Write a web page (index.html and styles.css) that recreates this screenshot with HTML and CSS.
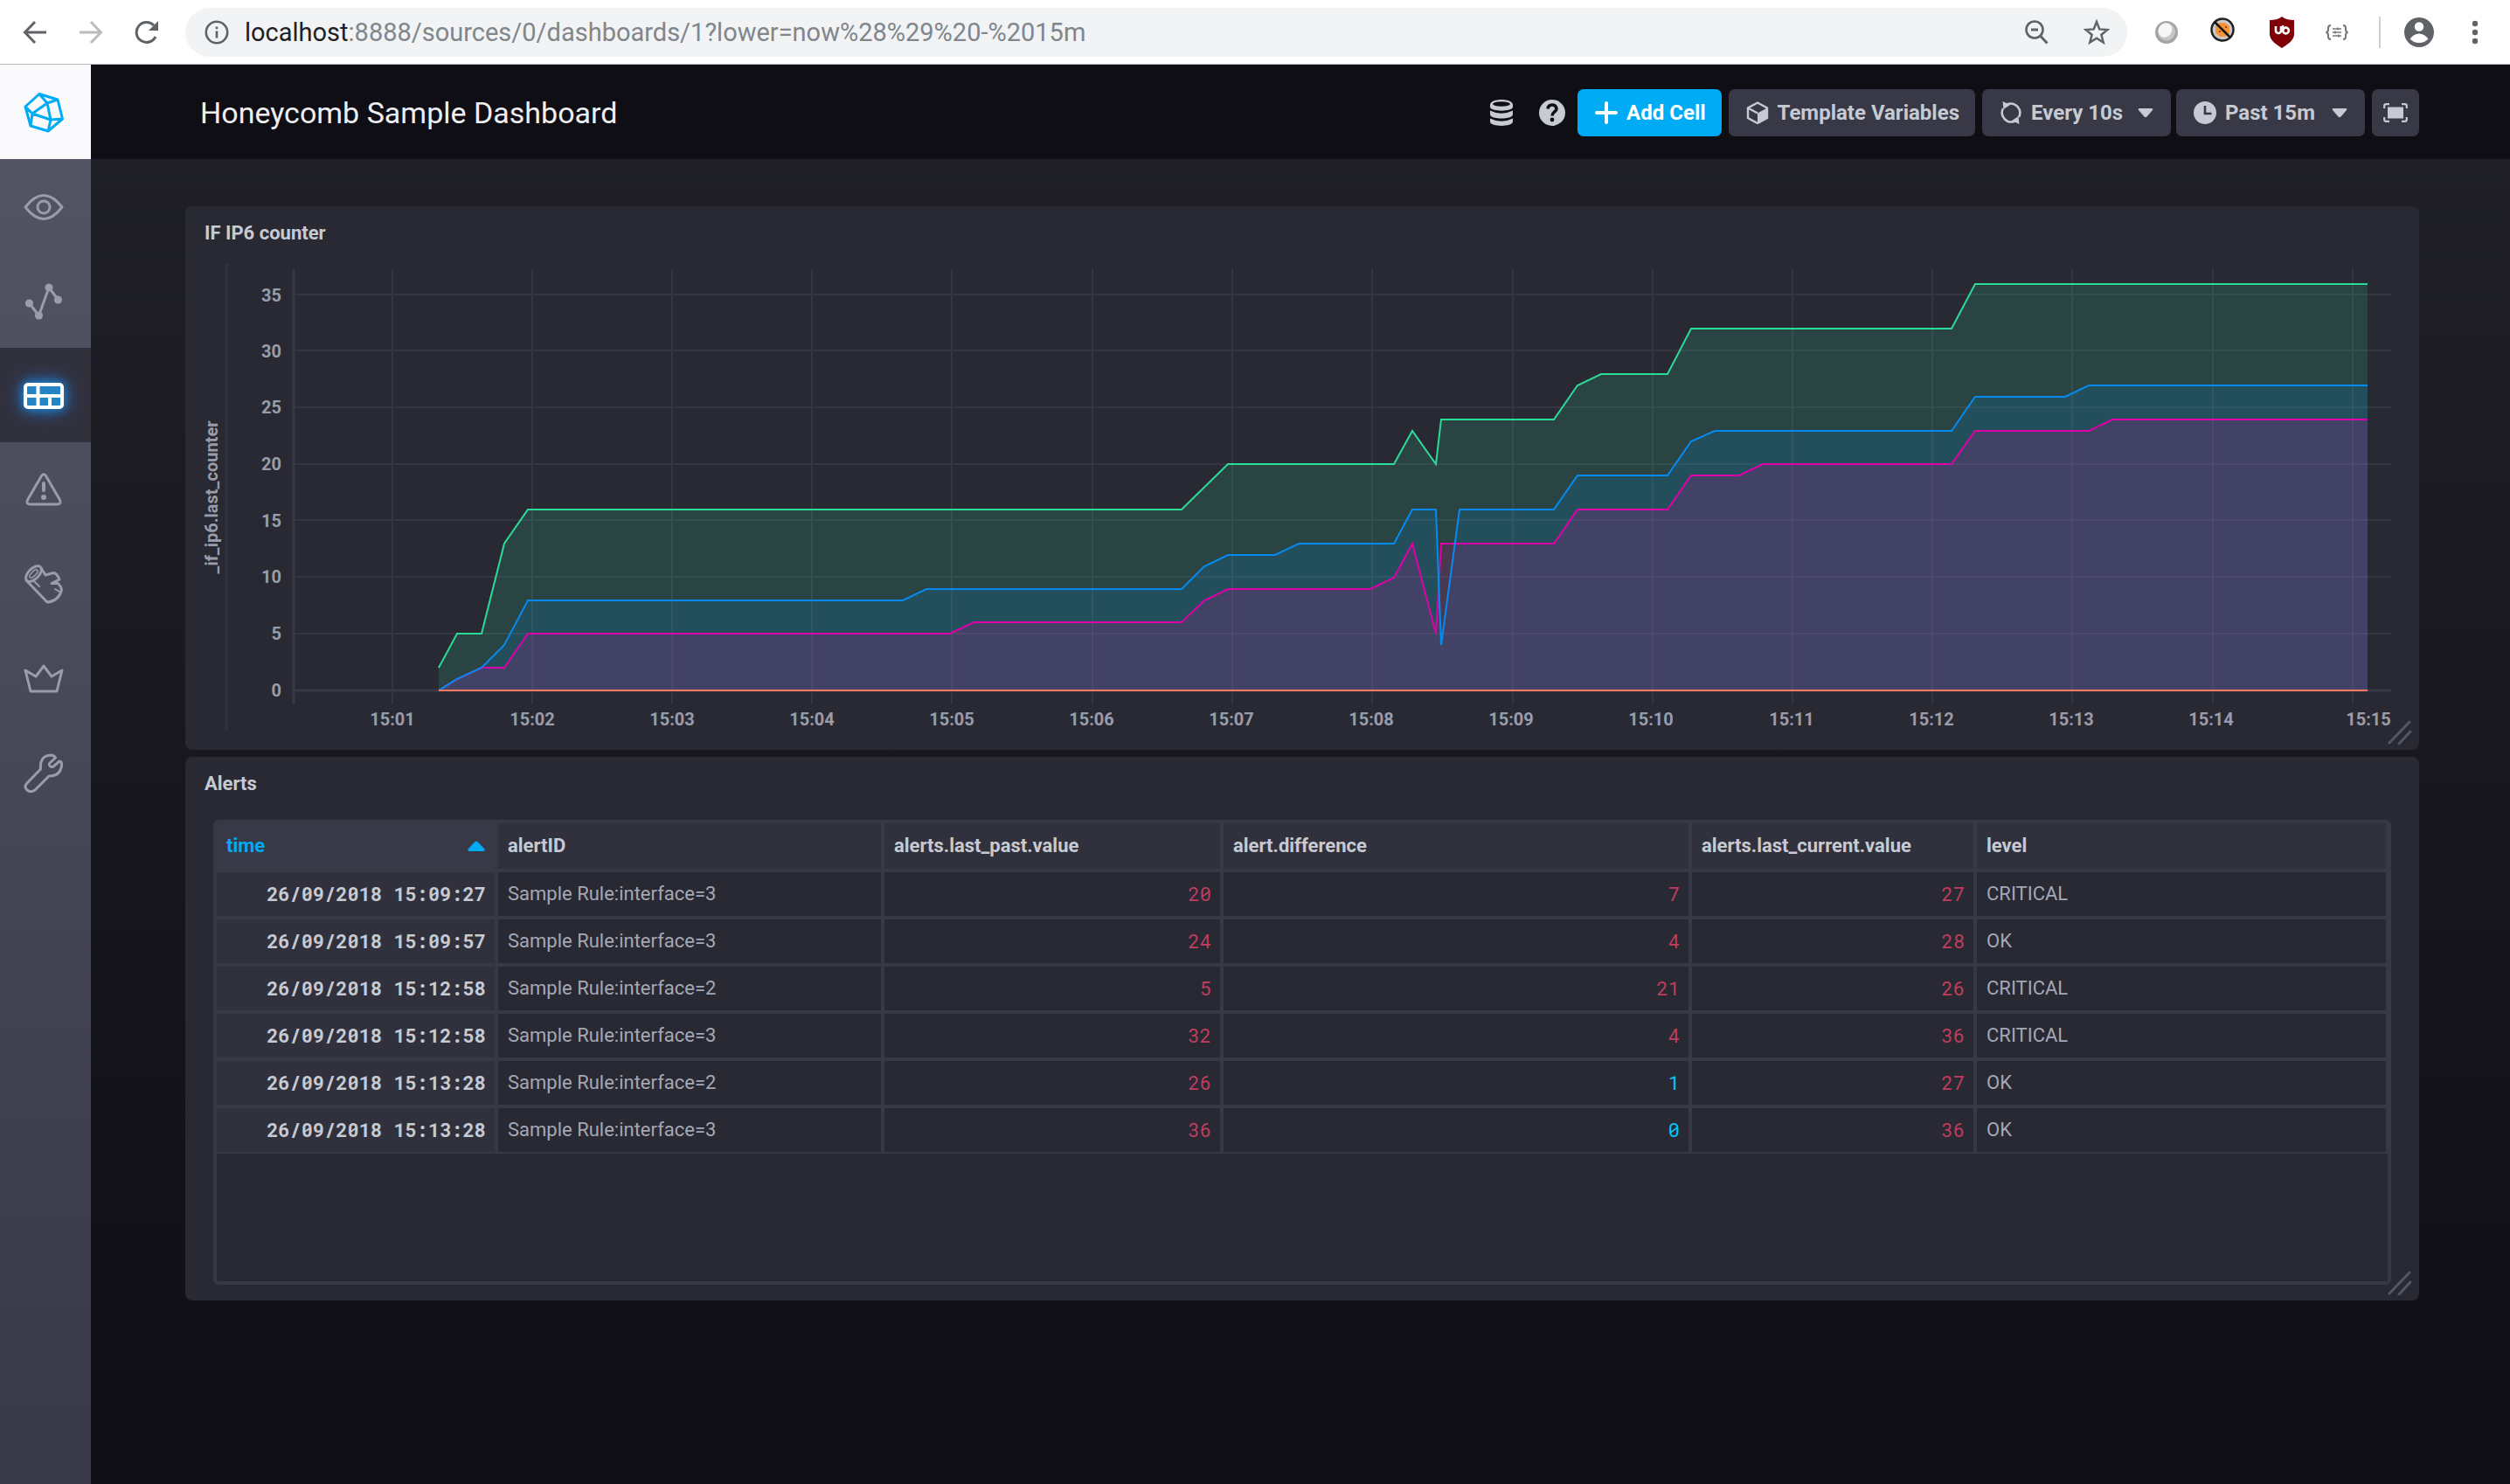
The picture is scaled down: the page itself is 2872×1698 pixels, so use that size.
FILE: index.html
```html
<!DOCTYPE html>
<html lang="en">
<head>
<meta charset="utf-8">
<title>Honeycomb Sample Dashboard</title>
<link rel="stylesheet" href="styles.css">
</head>
<body>
<div class="window">
  <header class="browser">
    <button class="nav-button" aria-label="Back"><svg width="28" height="28" viewBox="0 0 28 28"><path d="M27 14H3M14 2L2.500 14L14 26" fill="none" stroke="#5f6368" stroke-width="3"/></svg></button>
    <button class="nav-button" aria-label="Forward"><svg width="28" height="28" viewBox="0 0 28 28"><path d="M1 14H25M14 2L25.500 14L14 26" fill="none" stroke="#babcbe" stroke-width="3"/></svg></button>
    <button class="nav-button" aria-label="Reload"><svg width="28" height="28" viewBox="0 0 28 28"><path d="M24 19A11.500 11.500 0 1 1 22 6" fill="none" stroke="#5f6368" stroke-width="3"/><path d="M27 1V12H16z" fill="#5f6368"/></svg></button>
    <div class="address">
      <svg width="28" height="28" viewBox="0 0 28 28"><circle cx="14" cy="14" r="12.200" fill="none" stroke="#5f6368" stroke-width="2.600"/><path d="M14 12.500V20.500M14 7.500V10.200" stroke="#5f6368" stroke-width="2.600"/></svg>
      <a class="url" href="#"><span class="host">localhost</span>:8888/sources/0/dashboards/1?lower=now%28%29%20-%2015m</a>
      <svg width="28" height="32" viewBox="0 0 28 32"><circle cx="12" cy="13" r="9.500" fill="none" stroke="#5f6368" stroke-width="2.600"/><path d="M8 13h8M18.500 20L26.500 28.500" stroke="#5f6368" stroke-width="3"/></svg>
      <svg class="star" width="30" height="32" viewBox="0 0 30 32"><path d="M15 4L18.300 12.400L27.500 13L20.400 18.700L22.700 27.500L15 22.700L7.300 27.500L9.600 18.700L2.500 13L11.700 12.400z" fill="none" stroke="#5f6368" stroke-width="2.500"/></svg>
    </div>
    <div class="extensions">
      <svg width="30" height="30" viewBox="0 0 30 30"><circle cx="15" cy="15" r="13" fill="#a5a5a5"/><circle cx="15" cy="14.500" r="10" fill="#c6c6c6"/><ellipse cx="13.500" cy="12.500" rx="7.500" ry="8.500" transform="rotate(35 13.500 12.500)" fill="#f7f7f7"/></svg>
      <svg width="34" height="34" viewBox="0 0 34 34"><circle cx="15" cy="14" r="12.500" fill="#c9c9c9" stroke="#222" stroke-width="2.500"/><path d="M7 9L12 6H18L23 10V18L18 22H12L7 18z" fill="#f79338"/><path d="M11 16h2M17 17h3M18 11h2" stroke="#8a4a10" stroke-width="2"/><path d="M6 5L24 23" stroke="#111" stroke-width="2.500"/></svg>
      <svg width="30" height="38" viewBox="0 0 30 38"><path d="M15 1C19 4 24 5 29 5V22C28 29 21 33 15 37C9 33 2 29 1 22V5C6 5 11 4 15 1z" fill="#800007"/><path d="M8 12V17A3 3 0 0 0 14 17V12" fill="none" stroke="#fff" stroke-width="2.600"/><circle cx="19.500" cy="17" r="3.400" fill="none" stroke="#fff" stroke-width="2.600"/><path d="M16.100 11V17" stroke="#fff" stroke-width="2.400"/></svg>
      <svg width="28" height="20" viewBox="0 0 28 20"><path d="M7 2Q4 2 4 5V7Q4 9.500 1.500 10Q4 10.500 4 13V15Q4 18 7 18M21 2Q24 2 24 5V7Q24 9.500 26.500 10Q24 10.500 24 13V15Q24 18 21 18" fill="none" stroke="#777" stroke-width="2"/><path d="M9 6h10M9 10h10M9 14h10M15 4.500v3M12 8.500v3M16 12.500v3" stroke="#777" stroke-width="1.600"/></svg>
      <span class="divider"></span>
      <svg width="34" height="34" viewBox="0 0 34 34"><circle cx="17" cy="17" r="17" fill="#5f6368"/><circle cx="17" cy="10.500" r="5.200" fill="#fff"/><path d="M6.500 24.500Q11 18.500 17 18.500T27.500 24.500Q23 29 17 29T6.500 24.500z" fill="#fff"/></svg>
      <button class="menu-button" aria-label="Browser menu"><svg width="8" height="28" viewBox="0 0 8 28"><g fill="#5f6368"><circle cx="4" cy="4" r="3.200"/><circle cx="4" cy="14" r="3.200"/><circle cx="4" cy="24" r="3.200"/></g></svg></button>
    </div>
  </header>

  <div class="app">
    <nav class="sidebar">
      <a class="side-item logo" href="#" aria-label="Home"><svg width="46" height="46" viewBox="0 0 46 46"><path d="M18 1.500L39 8L44.500 30L28 44L8 38L2 16zM18 1.500L27 12L39 8M27 12L31 31L28 44M31 31L44.500 30M27 12L10 24L31 31M10 24L2 16M10 24L8 38"/></svg></a>
      <a class="side-item" href="#" aria-label="Host list"><svg width="46" height="46" viewBox="0 0 46 46"><path d="M2 23Q23-4 44 23Q23 50 2 23z"/><circle cx="23" cy="23" r="7"/></svg></a>
      <a class="side-item" href="#" aria-label="Explore"><svg width="46" height="46" viewBox="0 0 46 46"><path d="M6.500 25L17.500 39L29 7L39.500 21"/><g class="solid"><circle cx="6.500" cy="25" r="4.600"/><circle cx="17.500" cy="39" r="4.600"/><circle cx="29" cy="7" r="4.600"/><circle cx="39.500" cy="21" r="4.600"/></g></svg></a>
      <a class="side-item active" href="#" aria-label="Dashboards"><svg width="46" height="46" viewBox="0 0 46 46"><rect x="2" y="10" width="42" height="26" rx="3" fill="#2384c6"/><path d="M2 23H44M16.500 10V36M30 23V36"/></svg></a>
      <a class="side-item" href="#" aria-label="Alerting"><svg width="46" height="46" viewBox="0 0 46 46"><path d="M20.500 6.500Q23 3 25.500 6.500L41.500 34Q43.500 39 38.500 39H7.500Q2.500 39 4.500 34z"/><path d="M23 15V23" stroke-width="4"/><circle class="solid" cx="23" cy="31" r="3"/></svg></a>
      <a class="side-item" href="#" aria-label="Log viewer"><svg width="46" height="46" viewBox="0 0 46 46"><ellipse cx="11.500" cy="10.500" rx="11" ry="6" transform="rotate(-45 11.500 10.500)"/><ellipse cx="11.500" cy="10.500" rx="6" ry="2.400" transform="rotate(-45 11.500 10.500)" stroke-width="1.600"/><path d="M3 18L27 43Q40 42 43.500 29Q43 25 39.500 21.500H32L41 17Q38 9.500 34 9.500L25 12L20 4"/><path d="M12 19L18 25M36 28L41 31" stroke-width="2"/></svg></a>
      <a class="side-item" href="#" aria-label="Admin"><svg width="46" height="46" viewBox="0 0 46 46"><path d="M2 13L14 20L23 8L32 20L44 13L38 37H8z"/></svg></a>
      <a class="side-item" href="#" aria-label="Configuration"><svg width="46" height="46" viewBox="0 0 46 46"><path d="M4 34L19.500 18Q18 3 31 2Q35 2 36.500 5L29.500 11.500Q29 16 33.500 15.500L41 9Q44 9 43.500 14Q42 26 29 26L13 42Q8 45.500 4 42Q0 38 4 34z"/></svg></a>
    </nav>

    <main class="main">
      <header class="page-header">
        <h1>Honeycomb Sample Dashboard</h1>
        <div class="controls">
          <button class="icon-button" aria-label="Sources"><svg width="26" height="30" viewBox="0 0 26 30"><path d="M0 6C0-2 26-2 26 6V8.500C26 14 0 14 0 8.500z"/><ellipse cx="13" cy="5" rx="10" ry="2.800" fill="#0f0e15"/><path d="M0 12.500Q13 19 26 12.500V17C26 23 0 23 0 17zM0 21.500Q13 28 26 21.500V25C26 31.500 0 31.500 0 25z"/></svg></button>
          <button class="icon-button" aria-label="Help"><svg width="30" height="30" viewBox="0 0 30 30"><circle cx="15" cy="15" r="15"/><path d="M10 10.500Q10.500 6 15 6T20 10.500C20 14 15 14 15 18.500" fill="none" stroke="#0f0e15" stroke-width="3.600"/><circle cx="15" cy="23" r="2.400" fill="#0f0e15"/></svg></button>
          <button class="button primary"><svg width="26" height="26" viewBox="0 0 26 26"><path d="M13 2V24M2 13H24" stroke="#fff" stroke-width="4" stroke-linecap="round"/></svg>Add Cell</button>
          <button class="button"><svg width="26" height="26" viewBox="0 0 26 26"><path d="M13 1.500L24 7.500V19L13 25L2 19V7.500zM2 7.500L13 13.500" fill="none" stroke="currentColor" stroke-width="2.400"/><path d="M13 13.500L24 7.500V19L13 25z"/></svg>Template Variables</button>
          <div class="button-pair">
            <button class="button wide"><svg width="26" height="26" viewBox="0 0 26 26"><path d="M8.500 3.500A10.500 10.500 0 0 1 22 18M17.500 22.500A10.500 10.500 0 0 1 4 8" fill="none" stroke="currentColor" stroke-width="2.600"/><path d="M3.500 0L4.500 9L12 4zM22.500 26L21.500 17L14 22z"/></svg><span class="label">Every 10s</span><svg width="18" height="12" viewBox="0 0 18 12"><path d="M2 1H16Q18 1 17 3L10.500 10.500Q9 12 7.500 10.500L1 3Q0 1 2 1z"/></svg></button>
            <button class="button wide"><svg width="26" height="26" viewBox="0 0 26 26"><circle cx="13" cy="13" r="13"/><path d="M13 5V14H20.500" fill="none" stroke="#383846" stroke-width="2.600"/></svg><span class="label">Past 15m</span><svg width="18" height="12" viewBox="0 0 18 12"><path d="M2 1H16Q18 1 17 3L10.500 10.500Q9 12 7.500 10.500L1 3Q0 1 2 1z"/></svg></button>
          </div>
          <button class="button square" aria-label="Presentation mode"><svg width="28" height="22" viewBox="0 0 28 22"><rect x="5" y="4.500" width="18" height="13"/><path d="M1.200 6V3.200Q1.200 1.200 3.200 1.200H7M21 1.200H24.800Q26.800 1.200 26.800 3.200V6M26.800 16V18.800Q26.800 20.800 24.800 20.800H21M7 20.800H3.200Q1.200 20.800 1.200 18.800V16" fill="none" stroke="currentColor" stroke-width="2.200"/></svg></button>
        </div>
      </header>

      <div class="cells">
        <section class="cell">
          <h2>IF IP6 counter</h2>
          <svg class="chart" viewBox="212 296 2556 562" role="img" aria-label="Counter values over time">
            <path d="M259 302V836" class="rule"/>
            <path class="grid" d="M337 337H2736M337 401H2736M337 466H2736M337 531H2736M337 595H2736M337 660H2736M337 725H2736M449 308V806M609 308V806M769 308V806M929 308V806M1089 308V806M1250 308V806M1410 308V806M1570 308V806M1731 308V806M1891 308V806M2051 308V806M2211 308V806M2371 308V806M2532 308V806M2692 308V806"/>
            <path class="axis" d="M336 308V806M336 790H2736"/>
            <g class="area">
              <path d="M502 790V764L523 725H551L577 622L604 583H1352L1405 531H1595L1616 493L1643 531L1649 480H1778L1805 441L1832 428H1908L1935 376H2233L2260 324H2709V790z"/>
              <path d="M502 790L523 777L551 764L577 738L604 687H1033L1060 674H1352L1378 648L1405 635H1459L1486 622H1595L1616 583H1643L1649 738L1670 583H1778L1805 544H1908L1935 505L1962 493H2233L2260 454H2363L2390 441H2709V790z"/>
              <path d="M502 790L523 777L551 764H577L604 725H1087L1114 712H1352L1378 687L1405 674H1568L1595 661L1616 622L1643 725L1649 622H1778L1805 583H1908L1935 544H1990L2017 531H2233L2260 493H2390L2417 480H2709V790z"/>
            </g>
            <g class="line">
              <path stroke="#2cdb97" d="M502 764L523 725H551L577 622L604 583H1352L1405 531H1595L1616 493L1643 531L1649 480H1778L1805 441L1832 428H1908L1935 376H2233L2260 325H2709"/>
              <path stroke="#de00a8" d="M502 790L523 777L551 764H577L604 725H1087L1114 712H1352L1378 687L1405 674H1568L1595 661L1616 622L1643 725L1649 622H1778L1805 583H1908L1935 544H1990L2017 531H2233L2260 493H2390L2417 480H2709"/>
              <path stroke="#058bf0" d="M502 790L523 777L551 764L577 738L604 687H1033L1060 674H1352L1378 648L1405 635H1459L1486 622H1595L1616 583H1643L1649 738L1670 583H1778L1805 544H1908L1935 505L1962 493H2233L2260 454H2363L2390 441H2709"/>
              <path stroke="#f27a62" d="M502 790H2709"/>
            </g>
            <g class="tick end">
              <text x="322" y="345">35</text><text x="322" y="409">30</text><text x="322" y="473">25</text><text x="322" y="538">20</text><text x="322" y="603">15</text><text x="322" y="667">10</text><text x="322" y="732">5</text><text x="322" y="797">0</text>
            </g>
            <g class="tick">
              <text x="449" y="830">15:01</text><text x="609" y="830">15:02</text><text x="769" y="830">15:03</text><text x="929" y="830">15:04</text><text x="1089" y="830">15:05</text><text x="1249" y="830">15:06</text><text x="1409" y="830">15:07</text><text x="1569" y="830">15:08</text><text x="1729" y="830">15:09</text><text x="1889" y="830">15:10</text><text x="2050" y="830">15:11</text><text x="2210" y="830">15:12</text><text x="2370" y="830">15:13</text><text x="2530" y="830">15:14</text><text x="2710" y="830">15:15</text>
              <text transform="translate(249 569) rotate(-90)">_if_ip6.last_counter</text>
            </g>
          </svg>
          <svg class="resize" width="28" height="28" viewBox="0 0 28 28"><path d="M2 26L25 2M13 27L26 13"/></svg>
        </section>

        <section class="cell">
          <h2>Alerts</h2>
          <div class="table-frame">
            <table>
              <colgroup><col class="c-time"><col class="c-id"><col class="c-past"><col class="c-diff"><col class="c-current"><col class="c-level"></colgroup>
              <thead>
                <tr><th class="sorted"><span class="sort">time<svg width="20" height="12" viewBox="0 0 20 12"><path d="M8.500 1Q10 0 11.500 1L19.500 9.500Q20 12 18 12H2Q0 12 .5 9.500z" fill="#00abf5"/></svg></span></th><th>alertID</th><th>alerts.last_past.value</th><th>alert.difference</th><th>alerts.last_current.value</th><th>level</th></tr>
              </thead>
              <tbody>
                <tr><td class="time">26/09/2018 15:09:27</td><td>Sample Rule:interface=3</td><td class="num">20</td><td class="num">7</td><td class="num">27</td><td>CRITICAL</td></tr>
                <tr><td class="time">26/09/2018 15:09:57</td><td>Sample Rule:interface=3</td><td class="num">24</td><td class="num">4</td><td class="num">28</td><td>OK</td></tr>
                <tr><td class="time">26/09/2018 15:12:58</td><td>Sample Rule:interface=2</td><td class="num">5</td><td class="num">21</td><td class="num">26</td><td>CRITICAL</td></tr>
                <tr><td class="time">26/09/2018 15:12:58</td><td>Sample Rule:interface=3</td><td class="num">32</td><td class="num">4</td><td class="num">36</td><td>CRITICAL</td></tr>
                <tr><td class="time">26/09/2018 15:13:28</td><td>Sample Rule:interface=2</td><td class="num">26</td><td class="num low">1</td><td class="num">27</td><td>OK</td></tr>
                <tr><td class="time">26/09/2018 15:13:28</td><td>Sample Rule:interface=3</td><td class="num">36</td><td class="num low">0</td><td class="num">36</td><td>OK</td></tr>
              </tbody>
            </table>
          </div>
          <svg class="resize" width="28" height="28" viewBox="0 0 28 28"><path d="M2 26L25 2M13 27L26 13"/></svg>
        </section>
      </div>
    </main>
  </div>
</div>
</body>
</html>
```
FILE: styles.css
```css
* { box-sizing: border-box; }
body { margin: 0; font-family: Roboto, "Liberation Sans", sans-serif; background: #0f0e15; }
button { border: 0; padding: 0; margin: 0; background: none; font: inherit; color: inherit; }
a { color: inherit; text-decoration: none; }
svg { display: block; flex: none; }
h1, h2 { margin: 0; }

.window { display: flex; flex-direction: column; min-height: 100vh; }

/* Browser toolbar */
.browser { display: flex; align-items: center; height: 74px; padding: 0 36px 0 26px; background: #fff; border-bottom: 1px solid #b4b4b6; }
.nav-button { margin-right: 36px; }
.nav-button + .nav-button + .nav-button { margin-right: 30px; }
.address { display: flex; flex: 1; align-items: center; height: 56px; padding: 0 20px 0 22px; border-radius: 28px; background: #f1f3f4; }
.url { flex: 1; margin-left: 18px; font-size: 29px; line-height: 32px; color: #80868b; }
.host { color: #202124; }
.star { margin-left: 40px; }
.extensions { display: flex; align-items: center; gap: 34px; margin-left: 30px; }
.divider { width: 2px; height: 36px; margin-right: -7px; background: #d0d0d2; }
.menu-button { margin-left: 9px; }

/* App shell */
.app { display: flex; flex: 1; }
.sidebar { width: 104px; background: linear-gradient(#545667, #383846); }
.side-item { display: flex; align-items: center; justify-content: center; height: 108px; padding: 2px 4px 0 0; }
.side-item svg { fill: none; stroke: #999dab; stroke-width: 3; stroke-linejoin: round; stroke-linecap: round; }
.side-item .solid { fill: #999dab; stroke: none; }
.side-item.logo { background: #fafafc; }
.side-item.logo svg { stroke: #00abf5; }
.side-item.active { background: #31313d; }
.side-item.active svg { stroke: #fff; stroke-width: 4; filter: drop-shadow(0 0 6px #1590e0) drop-shadow(0 0 10px #2a5fb0); }
.main { flex: 1; min-width: 0; background: linear-gradient(#202028, #0f0e15); }

/* Page header */
.page-header { display: flex; align-items: center; justify-content: space-between; height: 108px; padding: 2px 104px 0 125px; background: #0f0e15; color: #eeeff2; }
h1 { font-size: 34px; line-height: 40px; font-weight: 400; }
.controls { display: flex; align-items: center; gap: 8px; color: #c6cad3; }
.controls svg { fill: currentColor; }
.icon-button { display: flex; justify-content: center; width: 30px; margin-right: 6px; }
.icon-button:first-child { margin-right: 20px; }
.button-pair { display: flex; gap: 6px; }
.button { display: flex; align-items: center; gap: 10px; height: 54px; padding: 0 18px 0 20px; border-radius: 7px; background: #383846; font-size: 24px; line-height: 28px; font-weight: 700; white-space: nowrap; }
.button.primary { background: #00abf5; color: #fff; }
.button.wide { width: 216px; padding: 0 20px; }
.button .label { flex: 1; text-align: left; }
.button.square { width: 54px; padding: 0; justify-content: center; }

/* Dashboard cells */
.cells { display: flex; flex-direction: column; gap: 8px; padding: 54px 104px 54px 108px; }
.cell { position: relative; min-height: 622px; border-radius: 8px; background: #292933; color: #c6cad3; }
h2 { height: 60px; padding: 17px 22px 0; font-size: 22px; line-height: 28px; font-weight: 700; }
.resize { position: absolute; right: 8px; bottom: 6px; fill: none; stroke: #545667; stroke-width: 3; stroke-linecap: round; }

/* Line chart */
.chart { width: 100%; height: auto; }
.chart path { fill: none; }
.rule { stroke: #31313d; stroke-width: 4; }
.grid { stroke: #353541; stroke-width: 2; }
.axis { stroke: #383846; stroke-width: 3; }
.chart .area path { fill-opacity: .15; }
.chart .area path:nth-child(1) { fill: #36dda4; }
.chart .area path:nth-child(2) { fill: #008deb; }
.chart .area path:nth-child(3) { fill: #fa00a0; }
.line { stroke-width: 2; }
.tick { fill: #999dab; font-size: 20px; font-weight: 700; text-anchor: middle; }
.tick.end { text-anchor: end; }

/* Alerts table */
.table-frame { height: 532px; margin: 12px 32px 18px; border: 4px solid #383846; border-radius: 6px; }
table { width: 100%; table-layout: fixed; border-collapse: separate; border-spacing: 0; }
.c-time { width: 322px; }
.c-id { width: 442px; }
.c-past { width: 388px; }
.c-diff { width: 536px; }
.c-current { width: 326px; }
.c-level { width: 470px; }
th, td { height: 54px; padding: 0 11px; border: solid #383846; border-width: 0 4px 4px 0; font-size: 22px; line-height: 28px; text-align: left; white-space: nowrap; }
th { height: 56px; background: #31313d; font-weight: 700; }
th.sorted { background: #383846; color: #00abf5; }
th:last-child, td:last-child { border-right-width: 2px; }
tbody tr:last-child td { height: 52px; border-bottom-width: 2px; }
td { font-weight: 400; color: #a4a8b6; }
.sort { display: flex; align-items: center; justify-content: space-between; }
td.time, td.num { padding-right: 10px; font-family: "Roboto Mono", "DejaVu Sans Mono", monospace; text-align: right; }
td.time { background: #31313d; font-weight: 700; color: #c6cad3; }
td.num { color: #bf3d5e; }
td.low { color: #00c9ff; }
```
